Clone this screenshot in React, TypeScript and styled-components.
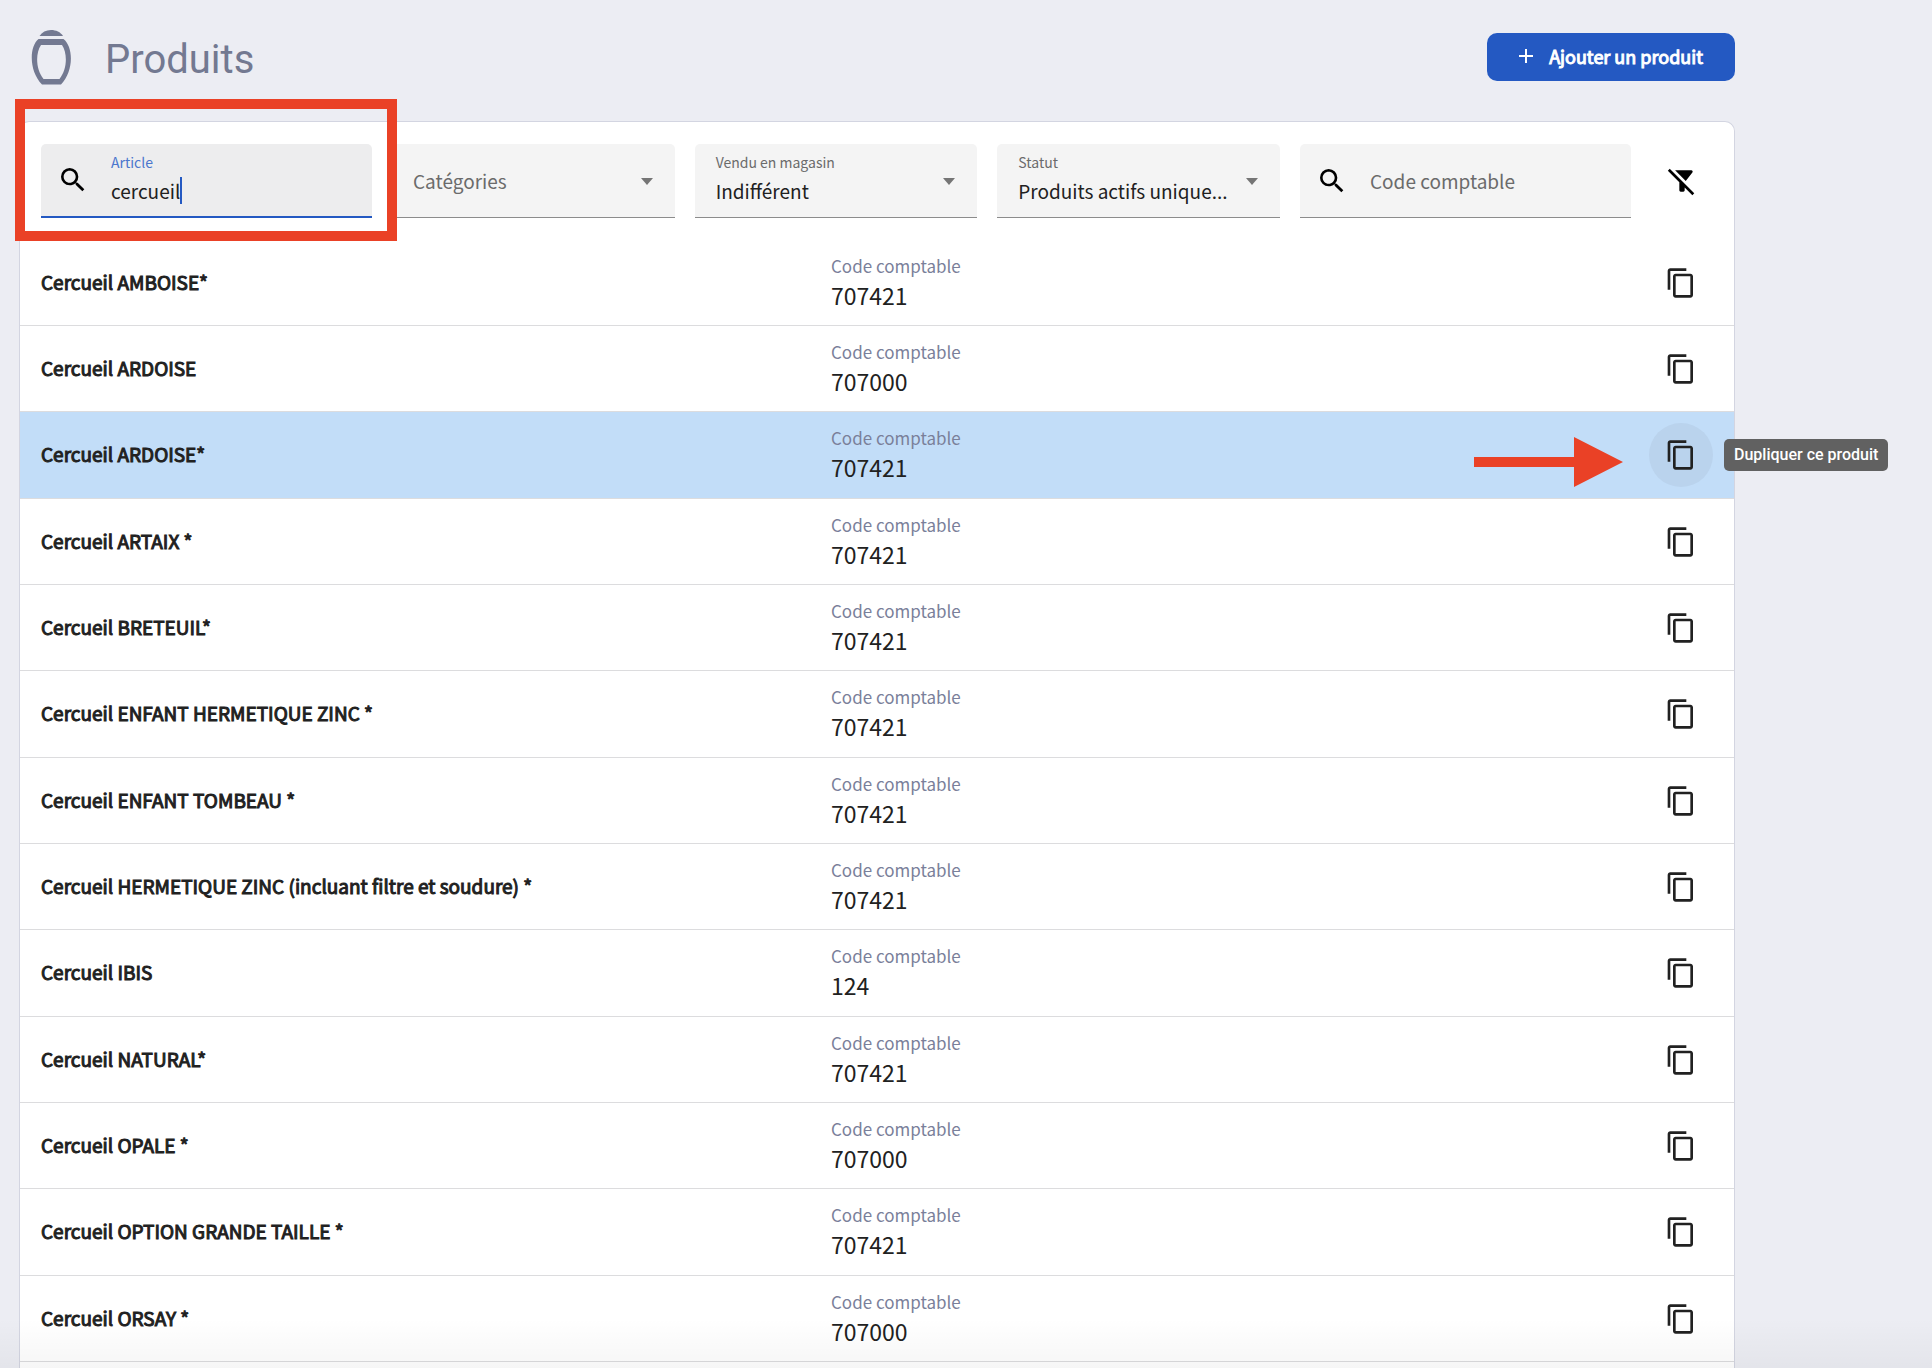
import React from "react";
import styled, { createGlobalStyle, css } from "styled-components";
import { MdContentCopy, MdFilterAltOff, MdSearch } from "react-icons/md";

const sans = `"Noto Sans CJK SC", "Noto Sans", sans-serif`;
const red = "#ea4126";
const blue = "#2459c2";

const GlobalStyle = createGlobalStyle`
  * { box-sizing: border-box; }
  body { margin: 0; background: #ecedf3; color: #212121; font-family: ${sans}; }
  button, input, select { font: inherit; color: inherit; border: 0; padding: 0; margin: 0; background: none; outline: none; }
`;

const Page = styled.div`
  position: relative;
  display: flex;
  flex-direction: column;
  height: 100vh;
  overflow: hidden;
  padding: 0 197px 0 19px;
  background: #ecedf3;
`;

const Header = styled.header`
  display: flex;
  align-items: center;
  flex: none;
  height: 121px;
  padding: 0 0 7px 12px;
`;

const Title = styled.h1`
  flex: 1;
  margin: 0 0 0 33px;
  padding-top: 6px;
  font: 400 40px/56px Roboto, sans-serif;
  color: #737991;
`;

const AddButton = styled.button`
  display: flex;
  align-items: center;
  gap: 16px;
  height: 48px;
  padding: 0 32px 2px;
  border-radius: 10px;
  background: ${blue};
  color: #fff;
  font-size: 18px;
  -webkit-text-stroke: 1px currentColor;
`;

const Card = styled.main`
  flex: 1 0 auto;
  border: 1px solid #d3d5e1;
  border-bottom: 0;
  border-radius: 10px 10px 0 0;
  background: #fff;
`;

const Filters = styled.form`
  position: relative;
  display: grid;
  grid-template-columns: 331px repeat(3, 1fr) 331px 62px;
  gap: 20px;
  padding: 22px 21px;
`;

const Field = styled.div<{ $active?: boolean; $search?: boolean }>`
  display: flex;
  align-items: center;
  min-width: 0;
  height: 74px;
  padding: 0 ${(p) => (p.$search ? 16 : 21)}px;
  border-radius: 5px 5px 0 0;
  background: #f4f4f4;
  border-bottom: 1px solid #8c8c8c;
  svg { flex: none; }
  ${(p) => p.$active && css`
    background: #ededee;
    border-bottom: 2px solid ${blue};
  `}
`;

const FieldBody = styled.div<{ $inset?: boolean; $labelled?: boolean }>`
  display: flex;
  flex: 1;
  flex-direction: column;
  min-width: 0;
  margin-left: ${(p) => (p.$inset ? 22 : 0)}px;
  padding-bottom: ${(p) => (p.$labelled ? 7 : 0)}px;
`;

const Label = styled.label<{ $active?: boolean }>`
  font-size: 14px;
  line-height: 28px;
  color: ${(p) => (p.$active ? "#4a76cd" : "#6b6b6b")};
`;

const InputLine = styled.div`
  display: flex;
  align-items: center;
  height: 30px;
`;

const TypedInput = styled.input`
  field-sizing: content;
  font-size: 19px;
  line-height: 30px;
  caret-color: transparent;
`;

const Caret = styled.span`
  width: 2px;
  height: 27px;
  background: ${blue};
`;

const Input = styled.input`
  width: 100%;
  font-size: 19px;
  line-height: 30px;
  &::placeholder { color: #6b6b6b; opacity: 1; }
`;

const Select = styled.select<{ $empty?: boolean }>`
  appearance: none;
  width: 100%;
  height: 30px;
  font-size: 19px;
  line-height: 30px;
  white-space: nowrap;
  color: ${(p) => (p.$empty ? "#6b6b6b" : "#212121")};
`;

const Chevron = styled.span`
  flex: none;
  margin: 2px 1px 0 7px;
  border: 6px solid transparent;
  border-top: 7px solid #757575;
  border-bottom: 0;
`;

const ClearButton = styled.button`
  display: flex;
  align-items: center;
  justify-content: center;
`;

const List = styled.ul`
  margin: 0;
  padding: 0;
  list-style: none;
`;

const Row = styled.li<{ $selected?: boolean }>`
  display: grid;
  grid-template-columns: 790fr 818fr 64px;
  align-items: center;
  height: 86px;
  padding: 0 21px;
  border-bottom: 1px solid #dcdcde;
  background: ${(p) => (p.$selected ? "#c2ddf8" : "transparent")};
  &:nth-child(3n) { height: 87px; }
`;

const Name = styled.span`
  padding-bottom: 2px;
  font-size: 19px;
  line-height: 30px;
  -webkit-text-stroke: 1px currentColor;
`;

const Code = styled.dl`
  margin: 0;
  padding-bottom: 4px;
  dt { font-size: 17px; line-height: 28px; color: #7a809a; }
  dd { margin: 0; font-size: 23px; line-height: 30px; }
`;

const Action = styled.div`
  position: relative;
`;

const CopyButton = styled.button<{ $hover?: boolean }>`
  display: flex;
  align-items: center;
  justify-content: center;
  width: 64px;
  height: 64px;
  border-radius: 50%;
  background: ${(p) => (p.$hover ? "#bad3ed" : "transparent")};
`;

const Tooltip = styled.div`
  position: absolute;
  top: 16px;
  left: calc(100% + 11px);
  padding: 0 10px;
  border-radius: 5px;
  background: #616161;
  color: #fff;
  font: 500 16px/32px Roboto, sans-serif;
  white-space: nowrap;
`;

const Arrow = styled.svg`
  position: absolute;
  top: 14px;
  right: calc(100% + 26px);
`;

const Highlight = styled.div`
  position: absolute;
  top: -23px;
  left: -5px;
  width: 382px;
  height: 142px;
  border: 10px solid ${red};
  pointer-events: none;
`;

const BottomShade = styled.div`
  position: absolute;
  inset: auto 0 0;
  height: 50px;
  background: linear-gradient(to bottom, rgba(0, 0, 0, 0), rgba(0, 0, 0, 0.035));
  pointer-events: none;
`;

const products: [string, string][] = [
  ["Cercueil AMBOISE*", "707421"],
  ["Cercueil ARDOISE", "707000"],
  ["Cercueil ARDOISE*", "707421"],
  ["Cercueil ARTAIX *", "707421"],
  ["Cercueil BRETEUIL*", "707421"],
  ["Cercueil ENFANT HERMETIQUE ZINC *", "707421"],
  ["Cercueil ENFANT TOMBEAU *", "707421"],
  ["Cercueil HERMETIQUE ZINC (incluant filtre et soudure) *", "707421"],
  ["Cercueil IBIS", "124"],
  ["Cercueil NATURAL*", "707421"],
  ["Cercueil OPALE *", "707000"],
  ["Cercueil OPTION GRANDE TAILLE *", "707421"],
  ["Cercueil ORSAY *", "707000"],
];

const selectedIndex = 2;

function UrnIcon() {
  return (
    <svg width="41" height="56" viewBox="0 0 41 56" fill="#737991" aria-hidden="true">
      <path d="M8.500 7C11 3 15 1 20 1s9.500 2 12 6z" />
      <path
        fillRule="evenodd"
        d="M7.500 10h25C42.500 18 43 42 30 55.500H11C-2 42-2 18 7.500 10zM10 16C4.500 24 4.500 40 12.500 50h16C36.500 40 36.500 24 31 16z"
      />
    </svg>
  );
}

function PlusIcon() {
  return (
    <svg width="14" height="14" viewBox="0 0 14 14" aria-hidden="true">
      <path d="M7 0v14M0 7h14" stroke="#fff" strokeWidth="2" />
    </svg>
  );
}

function SelectField({ id, label, value }: { id: string; label: string; value?: string }) {
  return (
    <Field>
      <FieldBody $labelled={!!value}>
        {value && <Label htmlFor={id}>{label}</Label>}
        <Select id={id} aria-label={label} $empty={!value}>
          <option>{value ?? label}</option>
        </Select>
      </FieldBody>
      <Chevron />
    </Field>
  );
}

export default function App() {
  return (
    <Page>
      <GlobalStyle />
      <Header>
        <UrnIcon />
        <Title>Produits</Title>
        <AddButton type="button">
          <PlusIcon />
          Ajouter un produit
        </AddButton>
      </Header>
      <Card>
        <Filters>
          <Field $active $search>
            <MdSearch size={32} color="#000" />
            <FieldBody $inset $labelled>
              <Label $active htmlFor="article">Article</Label>
              <InputLine>
                <TypedInput id="article" defaultValue="cercueil" />
                <Caret />
              </InputLine>
            </FieldBody>
          </Field>
          <SelectField id="categories" label="Catégories" />
          <SelectField id="magasin" label="Vendu en magasin" value="Indifférent" />
          <SelectField id="statut" label="Statut" value="Produits actifs unique..." />
          <Field $search>
            <MdSearch size={32} color="#000" />
            <FieldBody $inset>
              <Input aria-label="Code comptable" placeholder="Code comptable" />
            </FieldBody>
          </Field>
          <ClearButton type="button" aria-label="Effacer les filtres">
            <MdFilterAltOff size={32} color="#000" />
          </ClearButton>
          <Highlight />
        </Filters>
        <List>
          {products.map(([name, code], i) => {
            const selected = i === selectedIndex;
            return (
              <Row key={name} $selected={selected}>
                <Name>{name}</Name>
                <Code>
                  <dt>Code comptable</dt>
                  <dd>{code}</dd>
                </Code>
                <Action>
                  <CopyButton type="button" aria-label="Dupliquer ce produit" $hover={selected}>
                    <MdContentCopy size={32} />
                  </CopyButton>
                  {selected && (
                    <>
                      <Arrow width="149" height="50" viewBox="0 0 149 50" aria-hidden="true">
                        <path d="M0 20h100V0l49 25-49 25V30H0z" fill={red} />
                      </Arrow>
                      <Tooltip role="tooltip">Dupliquer ce produit</Tooltip>
                    </>
                  )}
                </Action>
              </Row>
            );
          })}
        </List>
      </Card>
      <BottomShade />
    </Page>
  );
}
